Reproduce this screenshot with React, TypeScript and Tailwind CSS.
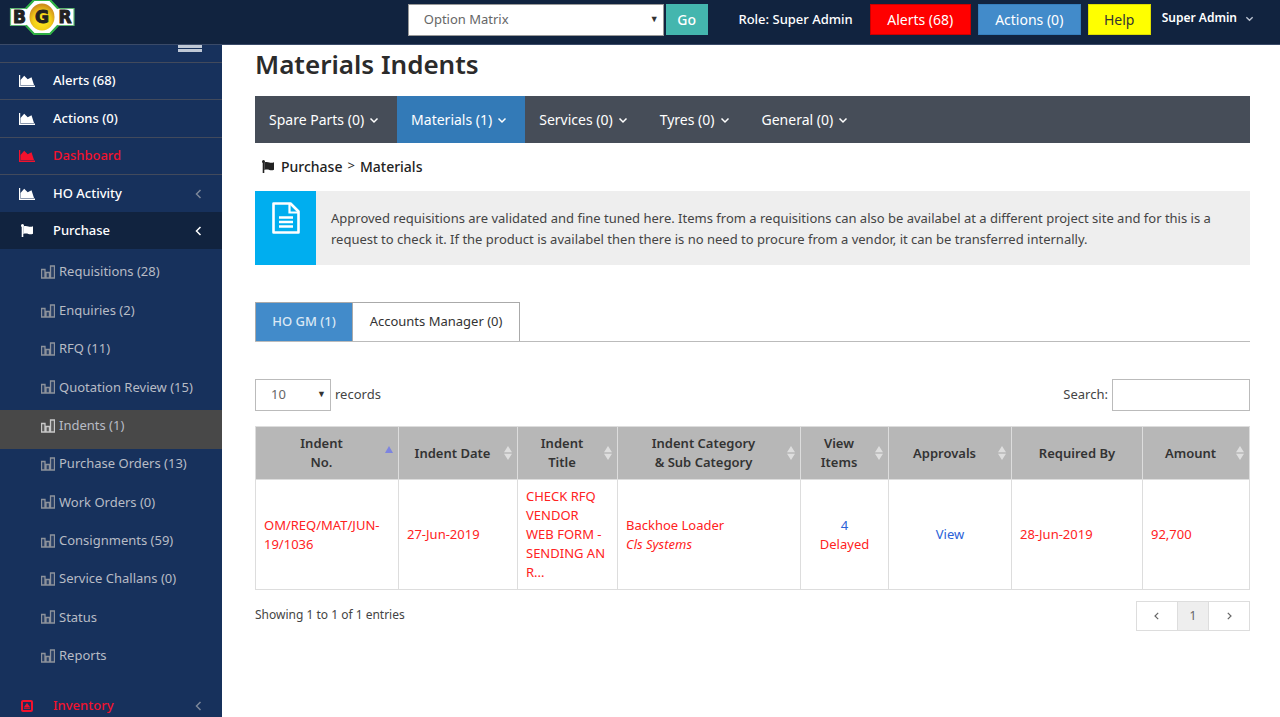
import React from "react";

type IconProps = { className?: string };

function AreaIcon({ className = "" }: IconProps) {
  return (
    <svg viewBox="0 0 16 12" className={`h-3 w-4 ${className}`} fill="currentColor" aria-hidden="true">
      <path d="M0 0h1.2v10.6H16V12H0z" />
      <path d="M1.500 10V5L5.200 .8l3.500 3.400L12.500 2.200 15 10z" />
    </svg>
  );
}

function FlagIcon({ className = "" }: IconProps) {
  return (
    <svg viewBox="0 0 12 13" className={`h-[13px] w-3 ${className}`} fill="currentColor" aria-hidden="true">
      <circle cx="1.500" cy="1.500" r="1.500" />
      <path d="M.700 1.500H2.300V13H.700z" />
      <path d="M2.300 2.400C4.300 1.700 6 2 7.400 2.500c1.600.500 3 .3 4.600-.3v7.600c-1.600.600-3 .700-4.600.2C6 9.500 4.300 9.300 2.300 10z" />
    </svg>
  );
}

function BarsIcon({ className = "" }: IconProps) {
  return (
    <svg viewBox="0 0 14 14" className={`size-[14px] ${className}`} fill="currentColor" fillOpacity="0.15" stroke="currentColor" aria-hidden="true">
      <path d="M.5 4.500h3.500v8.500H.5zM5 7.500h3.500v5.500H5zM9.500 1H13.500v12H9.500z" strokeWidth="1.300" />
    </svg>
  );
}

function BadgeIcon({ className = "" }: IconProps) {
  return (
    <svg viewBox="0 0 12 12" className={`size-3 ${className}`} aria-hidden="true">
      <rect x="1" y="1" width="10" height="10" rx="1" fill="none" stroke="currentColor" strokeWidth="2" />
      <path d="M3 7 6 3l3 4zM3 7.500h6v1.300H3z" fill="currentColor" />
    </svg>
  );
}

function DocIcon() {
  return (
    <svg viewBox="0 0 28 32" className="h-8 w-7" fill="none" stroke="#fff" aria-hidden="true">
      <path d="M1.500 1.500H18.500L26.500 9.500V30.500H1.500z" strokeWidth="2.600" strokeLinejoin="round" />
      <path d="M17.500 1.500V10.500H26.500" strokeWidth="2.200" />
      <path d="M7 15.500H21M7 20H21M7 24.500H21" strokeWidth="2.600" />
    </svg>
  );
}

function Chevron({ dir, className = "size-[10px]" }: { dir: "left" | "right" | "down"; className?: string }) {
  const d = dir === "left" ? "M6.500 1 2.500 5l4 4" : dir === "right" ? "M3.500 1l4 4-4 4" : "M1.500 3.500 5 7l3.500-3.500";
  return (
    <svg viewBox="0 0 10 10" className={`shrink-0 ${className}`} fill="none" stroke="currentColor" strokeWidth="1.500" aria-hidden="true">
      <path d={d} />
    </svg>
  );
}

function Logo() {
  return (
    <svg viewBox="0 0 66 36" className="h-9 w-[66px]" role="img" aria-label="BGR">
      <defs>
        <radialGradient id="gold" cx="50%" cy="65%" r="60%">
          <stop offset="0" stopColor="#ffee20" />
          <stop offset="0.600" stopColor="#f2cc18" />
          <stop offset="1" stopColor="#cf8d1c" />
        </radialGradient>
      </defs>
      <path d="M1.500 8.500H17L25 0H41L49 8.500H65V25.500H49L41 34H25L17 25.500H1.500z" fill="#fff" stroke="#5fb872" strokeWidth="1.200" />
      <path d="M17 8.500 25 0H41L49 8.500M49 25.500 41 34H25L17 25.500" fill="none" stroke="#2fb045" strokeWidth="2" />
      <ellipse cx="33" cy="17" rx="12.500" ry="13.500" fill="url(#gold)" />
      <g fill="#222" fontFamily="'DejaVu Sans', sans-serif" fontWeight="700" fontSize="17" textAnchor="middle" stroke="#222" strokeWidth="1">
        <text x="10.500" y="23">B</text>
        <text x="33" y="23">G</text>
        <text x="56" y="23">R</text>
      </g>
    </svg>
  );
}

const topItems = [
  { label: "Alerts (68)", color: "text-white" },
  { label: "Actions (0)", color: "text-white" },
  { label: "Dashboard", color: "text-[#f3122d]" },
];

const subItems = [
  "Requisitions (28)",
  "Enquiries (2)",
  "RFQ (11)",
  "Quotation Review (15)",
  "Indents (1)",
  "Purchase Orders (13)",
  "Work Orders (0)",
  "Consignments (59)",
  "Service Challans (0)",
  "Status",
  "Reports",
];

function Sidebar() {
  return (
    <nav className="w-[222px] shrink-0 overflow-hidden bg-[#17315c] text-[13px] font-medium text-white">
      <div className="flex h-[18px] items-start justify-end border-b border-[#424a5c] pr-5">
        <button aria-label="Toggle menu" className="flex flex-col gap-px">
          <span className="h-[3px] w-6 bg-[#bfc8d6]" />
          <span className="h-[3px] w-6 bg-[#bfc8d6]" />
        </button>
      </div>
      {topItems.map((t) => (
        <a key={t.label} href="#" className={`flex h-[38px] items-center border-b border-[#424a5c] pl-[19px] nth-[even]:h-[37px] ${t.color}`}>
          <AreaIcon className="mr-[18px]" />
          {t.label}
        </a>
      ))}
      <a href="#" className="flex h-[37px] items-center pr-[18px] pl-[19px]">
        <AreaIcon className="mr-[18px]" />
        <span className="flex-1">HO Activity</span>
        <Chevron dir="left" className="size-[10px] text-[#7c8799]" />
      </a>
      <a href="#" className="flex h-[37px] items-center bg-[#11233f] pr-[18px] pl-[21px]">
        <FlagIcon className="mr-5" />
        <span className="flex-1">Purchase</span>
        <Chevron dir="left" />
      </a>
      <ul className="grid h-[438px] auto-rows-fr py-2 font-normal text-[#b8bcc5]">
        {subItems.map((s) => (
          <li key={s} className={s === "Indents (1)" ? "bg-[#484848]" : ""}>
            <a href="#" className="flex h-full items-center gap-1 pb-2 pl-[41px]">
              <BarsIcon className={s === "Indents (1)" ? "text-[#c8c8c8]" : "text-[#8d929b]"} />
              {s}
            </a>
          </li>
        ))}
      </ul>
      <a href="#" className="flex h-[38px] items-center pr-[18px] pl-[21px] text-[#f3122d]">
        <BadgeIcon className="mr-5" />
        <span className="flex-1">Inventory</span>
        <Chevron dir="left" className="size-[10px] text-[#7c8799]" />
      </a>
    </nav>
  );
}

function Header() {
  return (
    <header className="flex h-[45px] shrink-0 items-start border-b border-[#3a4a68] bg-[#11233f] pr-[26px] pl-[9px] text-white">
      <Logo />
      <div className="ml-auto flex items-start pt-1 text-[14px]">
        <div className="relative mr-[2px]">
          <select aria-label="Project" className="block h-8 w-[256px] appearance-none border border-[#999] bg-white pl-[15px] text-[13px] text-[#666]">
            <option>Option Matrix</option>
          </select>
          <span className="pointer-events-none absolute top-[9px] right-[5px] text-[9px] leading-3 text-[#333]">▼</span>
        </div>
        <button className="h-[31px] w-[42px] bg-[#44b6ae] font-medium">Go</button>
        <span className="w-[162px] pr-[17px] text-right text-[13px] leading-[31px] font-medium">Role: Super Admin</span>
        <button className="h-[31px] w-[101px] border border-[#c00] bg-[#f00]">Alerts (68)</button>
        <button className="ml-[7px] h-[31px] w-[103px] border border-[#357ebd] bg-[#428bca]">Actions (0)</button>
        <button className="ml-[7px] h-[31px] w-[63px] border border-[#dd0] bg-[#ff0] text-[#333]">Help</button>
        <button className="ml-[11px] flex h-7 items-center gap-2 text-[12px] font-semibold">
          Super Admin
          <Chevron dir="down" className="size-[9px] text-[#bcc4d2]" />
        </button>
      </div>
    </header>
  );
}

const tabs = ["Spare Parts (0)", "Materials (1)", "Services (0)", "Tyres (0)", "General (0)"];

const columns = [
  { lines: ["Indent", "No."], w: "w-[143px]", sort: "asc" },
  { lines: ["Indent Date"], w: "w-[119px]", sort: "both" },
  { lines: ["Indent", "Title"], w: "w-[100px]", sort: "both" },
  { lines: ["Indent Category", "& Sub Category"], w: "w-[183px]", sort: "both" },
  { lines: ["View", "Items"], w: "w-[88px]", sort: "both" },
  { lines: ["Approvals"], w: "w-[123px]", sort: "both" },
  { lines: ["Required By"], w: "w-[131px]", sort: "none" },
  { lines: ["Amount"], w: "w-[107px]", sort: "both" },
];

function SortMark({ sort }: { sort: string }) {
  if (sort === "none") return null;
  return (
    <svg viewBox="0 0 8 14" className="absolute top-[19px] right-[5px] h-[14px] w-2" aria-hidden="true">
      {sort === "asc" ? (
        <path d="M0 7 4 0l4 7z" fill="#7d84e0" />
      ) : (
        <path d="M0 6.300 4 0l4 6.300zM0 7.700 4 14l4-6.300z" fill="#dedede" />
      )}
    </svg>
  );
}

function IndentTable() {
  const cell = "border border-[#ddd] px-2 py-[6px] align-middle";
  return (
    <table className="mt-[15px] w-full table-fixed border-collapse text-[13px] leading-[19px] text-[#f22]">
      <thead className="bg-[#b7b7b7] text-[#333]">
        <tr className="h-[53px]">
          {columns.map((c) => (
            <th key={c.lines.join(" ")} className={`relative border border-[#ddd] p-0 font-semibold ${c.w} ${c.sort === "none" ? "" : "pr-[11px]"}`}>
              {c.lines.map((l) => (
                <span key={l} className="block">{l}</span>
              ))}
              <SortMark sort={c.sort} />
            </th>
          ))}
        </tr>
      </thead>
      <tbody>
        <tr className="h-[110px]">
          <td className={cell}>OM/REQ/MAT/JUN-19/1036</td>
          <td className={cell}>27-Jun-2019</td>
          <td className={cell}>CHECK RFQ VENDOR WEB FORM - SENDING AN R...</td>
          <td className={cell}>
            Backhoe Loader
            <br />
            <i>Cls Systems</i>
          </td>
          <td className={`${cell} text-center`}>
            <a href="#" className="text-[#2a62d8]">4</a>
            <br />
            Delayed
          </td>
          <td className={`${cell} text-center`}>
            <a href="#" className="text-[#2a62d8]">View</a>
          </td>
          <td className={cell}>28-Jun-2019</td>
          <td className={cell}>92,700</td>
        </tr>
      </tbody>
    </table>
  );
}

export default function App() {
  return (
    <div className="flex h-screen flex-col overflow-hidden bg-white font-['Noto_Sans',sans-serif] text-[#444]">
      <Header />
      <div className="flex min-h-0 flex-1">
        <Sidebar />
        <main className="min-w-0 flex-1 pr-[30px] pl-[33px]">
          <h1 className="pt-[3px] text-[26px] leading-8 font-semibold text-[#2b2b2b]">Materials Indents</h1>
          <nav className="mt-4 flex h-[47px] bg-[#464d58] text-[14px] text-white">
            {tabs.map((t) => (
              <a
                key={t}
                href="#"
                className={`flex items-center gap-[5px] pr-[18px] pl-[14px] ${t === "Materials (1)" ? "bg-[#337ab7]" : ""}`}
              >
                {t}
                <Chevron dir="down" />
              </a>
            ))}
          </nav>
          <div className="mt-3 flex h-[22px] items-center pl-[7px] text-[14px] font-medium text-[#222]">
            <FlagIcon className="mr-[7px]" />
            <a href="#">Purchase</a>
            <span className="mx-[5px] text-[13px] font-normal">&gt;</span>
            <a href="#">Materials</a>
          </div>
          <section className="mt-[14px] flex h-[74px] bg-[#eee]">
            <div className="flex w-[61px] shrink-0 justify-center bg-[#00aeef] pt-[11px]">
              <DocIcon />
            </div>
            <p className="pt-[17px] pr-[20px] pl-[15px] text-[13px] leading-[21px] text-[#444]">
              Approved requisitions are validated and fine tuned here. Items from a requisitions can also be availabel at a different project site and for this is a request to check it. If the product is availabel then there is no need to procure from a vendor, it can be transferred internally.
            </p>
          </section>
          <div role="tablist" className="mt-[37px] flex h-10 border-b border-[#bbb] text-[13px]">
            <button role="tab" aria-selected="true" className="w-[98px] border border-b-0 border-[#aaa] bg-[#428bca] font-medium text-[#dbe8f4]">
              HO GM (1)
            </button>
            <button role="tab" aria-selected="false" className="w-[167px] border border-b-0 border-l-0 border-[#aaa] text-[#333]">
              Accounts Manager (0)
            </button>
          </div>
          <div className="mt-[37px] flex h-8 items-center justify-between text-[13px]">
            <label className="flex items-center gap-1">
              <span className="relative">
                <select className="block h-8 w-[76px] appearance-none border border-[#bbb] bg-white pl-[15px] text-[#666]">
                  <option>10</option>
                </select>
                <span className="pointer-events-none absolute top-[9px] right-[5px] text-[9px] leading-3 text-[#333]">▼</span>
              </span>
              records
            </label>
            <label className="flex items-center gap-1">
              Search:
              <input type="text" className="h-8 w-[138px] border border-[#bbb] px-2" />
            </label>
          </div>
          <IndentTable />
          <div className="mt-[11px] flex items-start justify-between text-[12px]">
            <span className="leading-[28px]">Showing 1 to 1 of 1 entries</span>
            <div className="flex h-[30px] border border-[#ddd] text-[#666]">
              <button aria-label="Previous" className="flex w-10 items-center justify-center">
                <Chevron dir="left" className="size-2" />
              </button>
              <button className="w-8 border-x border-[#ddd] bg-[#eee]">1</button>
              <button aria-label="Next" className="flex w-10 items-center justify-center">
                <Chevron dir="right" className="size-2" />
              </button>
            </div>
          </div>
        </main>
      </div>
    </div>
  );
}
